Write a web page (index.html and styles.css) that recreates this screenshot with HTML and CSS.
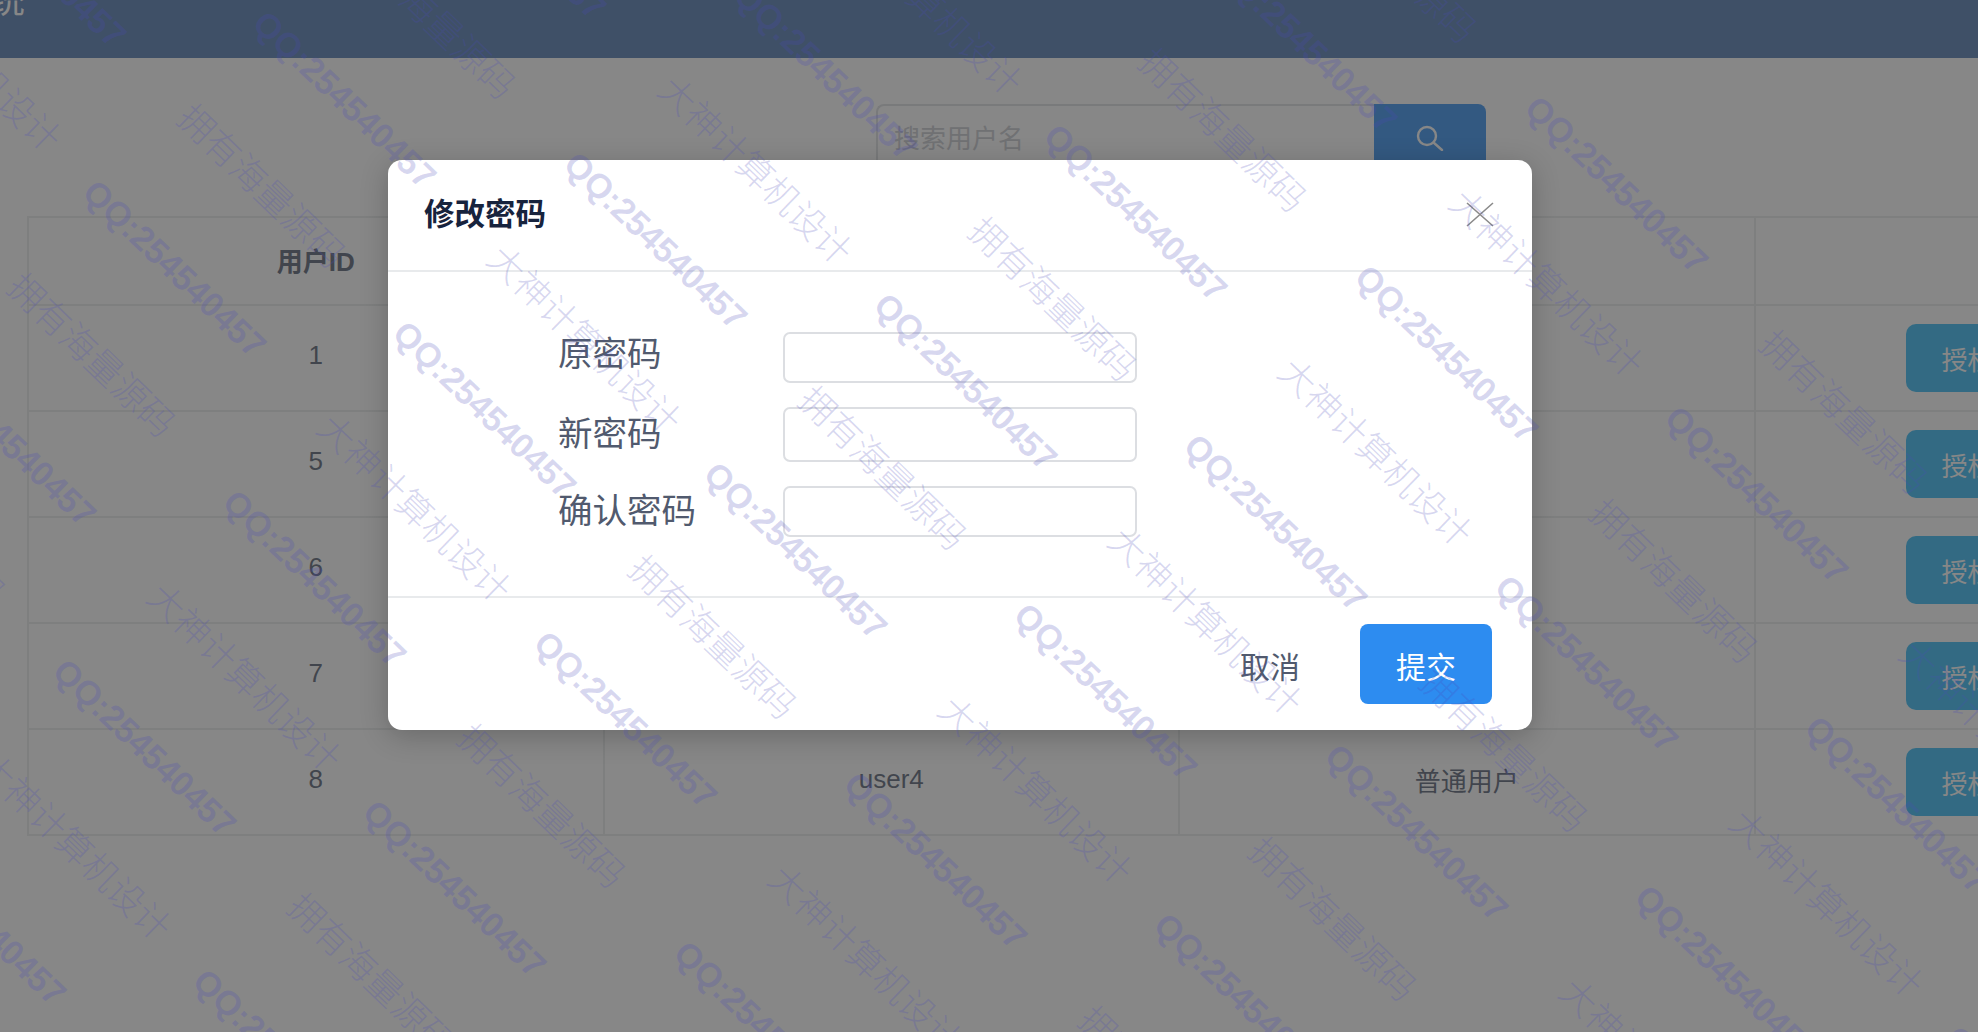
FILE: index.html
```html
<!DOCTYPE html>
<html lang="zh-CN">
<head>
  <meta charset="UTF-8">
  <title>用户管理</title>
  <link rel="stylesheet" href="styles.css">
</head>
<body>

  <header class="top-bar">
    <div class="top-title">系统</div>
  </header>

  <main class="content">
    <div class="search-row">
      <input class="search-input" type="text" placeholder="搜索用户名">
      <button class="search-button" type="button">
        <svg class="search-icon" viewBox="0 0 28 26" fill="none" stroke="currentColor" stroke-width="2.4">
          <circle cx="11" cy="11" r="9"/>
          <path d="M17.5 17.5L26 25" stroke-linecap="round"/>
        </svg>
      </button>
    </div>

    <table class="user-table">
      <thead>
        <tr>
          <th>用户ID</th>
          <th>用户名</th>
          <th>角色</th>
          <th>操作</th>
        </tr>
      </thead>
      <tbody>
        <tr><td>1</td><td>admin</td><td>管理员</td><td><button class="grant-button" type="button">授权</button></td></tr>
        <tr><td>5</td><td>user1</td><td>普通用户</td><td><button class="grant-button" type="button">授权</button></td></tr>
        <tr><td>6</td><td>user2</td><td>普通用户</td><td><button class="grant-button" type="button">授权</button></td></tr>
        <tr><td>7</td><td>user3</td><td>普通用户</td><td><button class="grant-button" type="button">授权</button></td></tr>
        <tr><td>8</td><td>user4</td><td>普通用户</td><td><button class="grant-button" type="button">授权</button></td></tr>
      </tbody>
    </table>
  </main>

  <div class="mask"></div>

  <div class="modal">
    <div class="modal-header">
      <h2 class="modal-title">修改密码</h2>
      <svg class="modal-close" viewBox="0 0 28 25" fill="none" stroke="currentColor" stroke-width="1.6">
        <path d="M1 1L27 24M27 1L1 24"/>
      </svg>
    </div>
    <form class="modal-body">
      <label class="field-label" for="oldPass">原密码</label>
      <input class="field-input" id="oldPass" type="password">
      <label class="field-label" for="newPass">新密码</label>
      <input class="field-input field-tall" id="newPass" type="password">
      <label class="field-label" for="confirmPass">确认密码</label>
      <input class="field-input" id="confirmPass" type="password">
    </form>
    <div class="modal-footer">
      <button class="cancel-button" type="button">取消</button>
      <button class="submit-button" type="button">提交</button>
    </div>
  </div>

  <div class="watermark" id="watermark"></div>

  <script>
    // watermark repeats on a slanted lattice, same steps for all three texts
    const layer = document.getElementById('watermark');
    const stepA = [480.6, -28];
    const stepC = [-170.2, 169];
    const marks = [
      { text: 'QQ:254540457', cls: 'mark-qq', x: 89, y: 169, every: 1, from: 0 },
      { text: '拥有海量源码', cls: 'mark-cn', x: 186, y: 91, every: 2, from: 0 },
      { text: '大神计算机设计', cls: 'mark-cn', x: 186, y: 91, every: 2, from: 1 }
    ];

    function addMark(mark, x, y) {
      if (x < -400 || x > 2000 || y < -300 || y > 1060) return;
      // the pattern stops short of the top right corner
      if (x - y > 1500) return;
      const el = document.createElement('span');
      el.className = 'mark ' + mark.cls;
      el.textContent = mark.text;
      el.style.left = x + 'px';
      el.style.top = y + 'px';
      layer.appendChild(el);
    }

    marks.forEach(function (mark) {
      for (let i = -8; i <= 8; i++) {
        if (mark.every === 2 && Math.abs(i % 2) !== mark.from) continue;
        for (let j = -8; j <= 12; j++) {
          addMark(mark, mark.x + i * stepA[0] + j * stepC[0], mark.y + i * stepA[1] + j * stepC[1]);
        }
      }
    });
  </script>
</body>
</html>
```

FILE: styles.css
```css
html, body {
  margin: 0;
  height: 1032px;
  overflow: hidden;
}

body {
  font-family: "Liberation Sans", "Noto Sans CJK SC", sans-serif;
  font-size: 26px;
  color: #515a6e;
  background-color: #ffffff;
  width: 1978px;
  position: relative;
}

.top-bar {
  height: 58px;
  background-color: #4c75ae;
  overflow: hidden;
}

.top-title {
  margin: -17px 0 0 -45px;
  font-size: 35px;
  line-height: 35px;
  color: #ffffff;
}

.content {
  padding: 46px 0 0 27px;
}

.search-row {
  display: flex;
  margin-left: 849px;
  height: 68px;
}

.search-input {
  width: 498px;
  box-sizing: border-box;
  padding: 3px 16px 0;
  font-family: inherit;
  font-size: 26px;
  color: #515a6e;
  border: 2px solid #dcdee2;
  border-right: 0;
  border-radius: 8px 0 0 8px;
  outline: none;
}

.search-input::placeholder {
  color: #c5c8ce;
}

.search-button {
  width: 112px;
  padding: 0;
  border: 0;
  border-radius: 0 8px 8px 0;
  background-color: #2d8cf0;
  color: #ffffff;
}

.search-icon {
  display: block;
  width: 28px;
  height: 26px;
  margin: 0 auto;
}

.user-table {
  width: 2304px;
  margin-top: 44px;
  table-layout: fixed;
  border-collapse: collapse;
  border: 2px solid #e8eaec;
}

.user-table th,
.user-table td {
  text-align: center;
  border: 2px solid #e8eaec;
}

.user-table th {
  height: 82px;
  padding: 0 0 4px;
  font-weight: bold;
}

.user-table td {
  height: 98px;
  padding: 0 0 6px;
}

.grant-button {
  display: block;
  width: 274px;
  height: 68px;
  margin: 0 0 -6px 150px;
  padding: 0 36px;
  border: 0;
  border-radius: 10px;
  background-color: #2db7f5;
  color: #ffffff;
  font-family: inherit;
  font-size: 26px;
  text-align: left;
}

.mask {
  position: absolute;
  inset: 0;
  background-color: rgba(55, 55, 55, 0.6);
}

.modal {
  position: absolute;
  left: 388px;
  top: 160px;
  width: 1144px;
  height: 570px;
  display: flex;
  flex-direction: column;
  background-color: #ffffff;
  border-radius: 14px;
  box-shadow: 0 6px 28px rgba(0, 0, 0, 0.22);
}

.modal-header {
  height: 112px;
  flex: none;
  display: flex;
  align-items: center;
  justify-content: space-between;
  padding: 0 38px 2px 36px;
  box-sizing: border-box;
  border-bottom: 2px solid #e8eaec;
}

.modal-title {
  margin: 0;
  font-size: 30.5px;
  line-height: 40px;
  font-weight: bold;
  color: #17233d;
}

.modal-close {
  width: 28px;
  height: 25px;
  color: #8a8a8a;
}

.modal-body {
  flex: 1;
  display: grid;
  grid-template-columns: 225px 354px;
  grid-template-rows: 51px 55px 51px;
  row-gap: 24px;
  align-items: center;
  padding: 60px 0 0 170px;
  border-bottom: 2px solid #e8eaec;
}

.field-label {
  font-size: 34.5px;
  line-height: 44px;
  margin-top: -1px;
  color: #515a6e;
}

.field-label:first-child {
  margin-top: -7px;
}

.field-input {
  height: 51px;
  width: 354px;
  box-sizing: border-box;
  border: 2px solid #dcdee2;
  border-radius: 7px;
  outline: none;
}

.field-tall {
  height: 55px;
}

.modal-footer {
  flex: none;
  height: 132px;
  box-sizing: border-box;
  display: flex;
  justify-content: flex-end;
  align-items: flex-start;
  padding: 26px 40px 0 0;
}

.cancel-button {
  height: 80px;
  margin-right: 60px;
  padding: 2px 0 0;
  border: 0;
  background: none;
  font-family: inherit;
  font-size: 30px;
  color: #515a6e;
}

.submit-button {
  width: 132px;
  height: 80px;
  padding: 2px 0 0;
  border: 0;
  border-radius: 8px;
  background-color: #2d8cf0;
  font-family: inherit;
  font-size: 30px;
  color: #ffffff;
}

.watermark {
  position: absolute;
  inset: 0;
  overflow: hidden;
  pointer-events: none;
}

.mark {
  position: absolute;
  white-space: nowrap;
  line-height: 1;
  color: rgba(75, 75, 186, 0.22);
  transform: rotate(44deg);
  transform-origin: 0 50%;
}

.mark-qq {
  font-family: "Liberation Sans", sans-serif;
  font-size: 34.5px;
  font-weight: bold;
}

.mark-cn {
  font-family: "Noto Sans CJK SC", sans-serif;
  font-size: 36px;
  font-weight: 300;
}
```
